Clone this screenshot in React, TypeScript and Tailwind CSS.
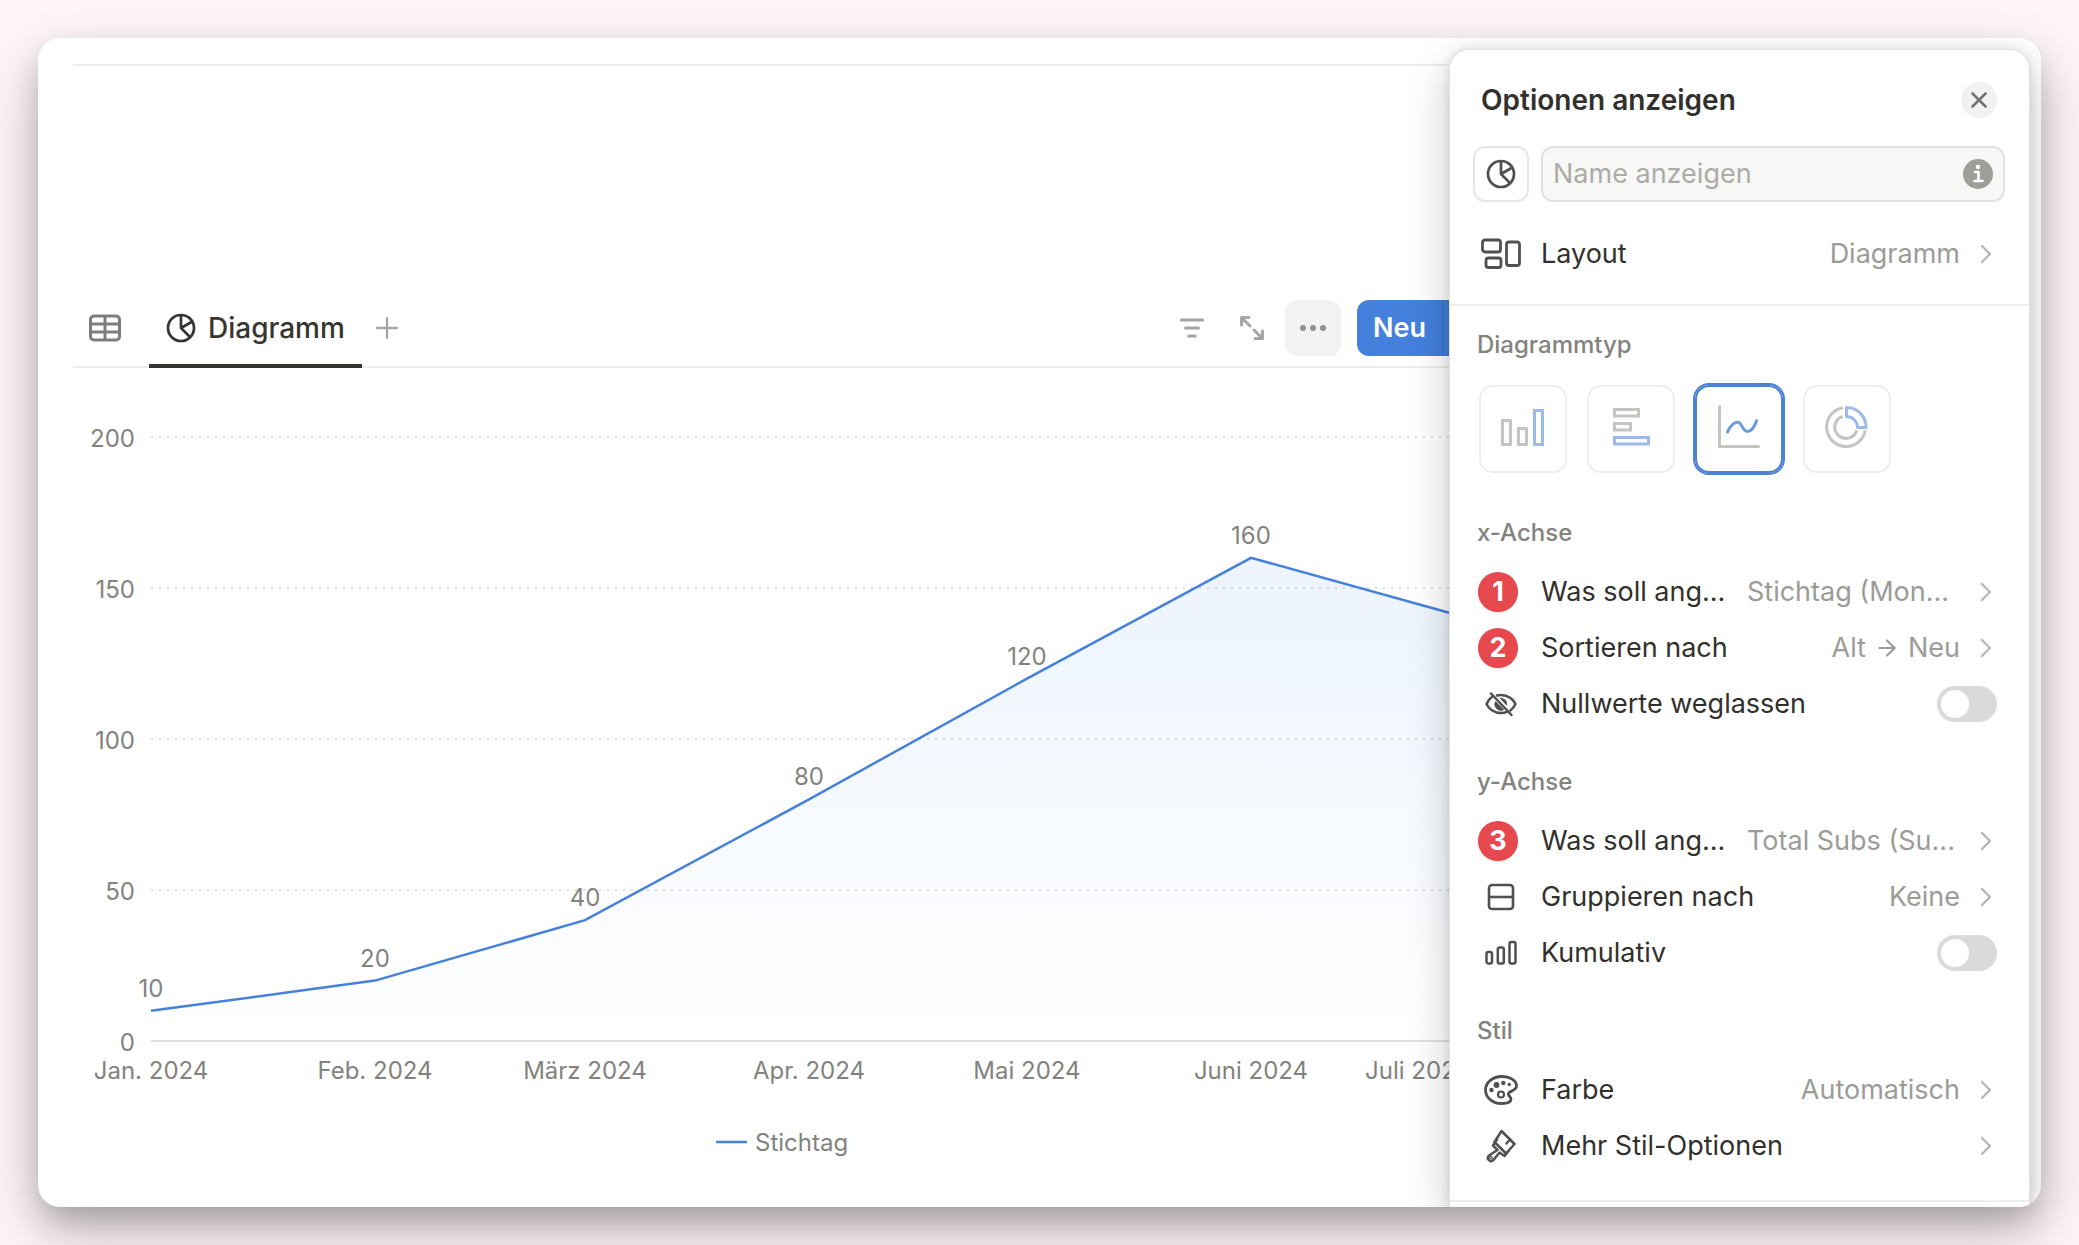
import React, { useState } from "react";
import { ArrowRight, Plus, X } from "lucide-react";

const months = [
  { label: "Jan. 2024", x: 113, value: 10 },
  { label: "Feb. 2024", x: 337, value: 20 },
  { label: "März 2024", x: 547, value: 40 },
  { label: "Apr. 2024", x: 771, value: 80 },
  { label: "Mai 2024", x: 989, value: 120 },
  { label: "Juni 2024", x: 1213, value: 160 },
  // the last label is pulled in so that it stays inside the plot
  { label: "Juli 2024", x: 1431, labelX: 1380, value: 140 },
];

const ticks = [200, 150, 100, 50, 0];
const BASE = 673;
const toY = (value: number) => BASE - value * 3.02;

const PieIcon = ({ size = 30 }: { size?: number }) => (
  <svg width={size} height={size} viewBox="0 0 30 30" fill="none" stroke="currentColor" strokeWidth="2.7" strokeLinejoin="round">
    <circle cx="15" cy="15" r="13" />
    <path d="M15 2v13l9.2 9.2M15 15l11.3-6.5" />
  </svg>
);

const TableIcon = () => (
  <svg width="32" height="28" viewBox="0 0 32 28" fill="none" stroke="currentColor" strokeWidth="3">
    <rect x="1.500" y="2" width="29" height="24" rx="3.500" />
    <path d="M1.500 10h29M1.500 18h29M16 2v24" />
  </svg>
);

const FilterIcon = () => (
  <svg width="26" height="22" viewBox="0 0 26 22" fill="none" stroke="currentColor" strokeWidth="3.2" strokeLinecap="round">
    <path d="M2.500 3h21M6.500 11h13M9.800 19h6.400" />
  </svg>
);

const ExpandIcon = () => (
  <svg width="26" height="26" viewBox="0 0 26 26" fill="none" stroke="currentColor" strokeWidth="3" strokeLinecap="round" strokeLinejoin="round">
    <path d="M2.500 10V2.500H10M2.500 2.500l8.500 8.500M23.500 16v7.500H16M23.500 23.500 15 15" />
  </svg>
);

const ChevronIcon = () => (
  <svg width="12" height="20" viewBox="0 0 12 20" fill="none" stroke="currentColor" strokeWidth="2.200" strokeLinecap="round" strokeLinejoin="round">
    <path d="m2 2 8 8-8 8" />
  </svg>
);

const InfoIcon = () => (
  <svg width="30" height="30" viewBox="0 0 30 30" fill="none">
    <circle cx="15" cy="15" r="15" fill="#9f9f9a" />
    <circle cx="15" cy="8" r="2.200" fill="#fff" />
    <path d="M12 13h3.500v8.500M11.500 22h8" stroke="#fff" strokeWidth="2.600" strokeLinecap="round" strokeLinejoin="round" />
  </svg>
);

const LayoutIcon = () => (
  <svg width="40" height="32" viewBox="0 0 40 32" fill="none" stroke="currentColor" strokeWidth="2.800">
    <rect x="1.500" y="2" width="18" height="12" rx="2.500" />
    <rect x="5" y="20" width="15" height="9.500" rx="2.500" />
    <rect x="25.500" y="4" width="13" height="23.500" rx="2.500" />
  </svg>
);

const EyeOffIcon = () => (
  <svg width="32" height="26" viewBox="0 0 32 26" fill="none" stroke="currentColor" strokeWidth="2.500" strokeLinecap="round">
    <path d="M7.500 5.500C4.500 7.500 2.500 10.500 1.500 13c2 4.500 7.500 9 14.500 9 2.200 0 4.200-.4 6-1.200M12 4.500c1.300-.3 2.600-.5 4-.5 7 0 12.500 4.500 14.500 9-1 2.300-2.800 4.700-5.200 6.400" />
    <path d="M10.500 10a6.400 6.400 0 0 0 8.800 8.800zM14.500 7a6.200 6.200 0 0 1 7.300 7.800z" fill="currentColor" stroke="none" />
    <path d="M6 2.500 26.500 24" />
  </svg>
);

const GroupIcon = () => (
  <svg width="28" height="28" viewBox="0 0 28 28" fill="none" stroke="currentColor" strokeWidth="2.600">
    <rect x="2" y="2" width="24" height="24" rx="3" />
    <path d="M2 14h24" />
  </svg>
);

const BarsIcon = () => (
  <svg width="32" height="26" viewBox="0 0 32 26" fill="none" stroke="currentColor" strokeWidth="2.500">
    <rect x="1.500" y="12" width="5.500" height="11.500" rx="1.800" />
    <rect x="12.800" y="7.500" width="6" height="16" rx="1.800" />
    <rect x="24.500" y="2" width="6" height="21.500" rx="1.800" />
  </svg>
);

const PaletteIcon = () => (
  <svg width="34" height="30" viewBox="0 0 34 30" fill="none" stroke="currentColor" strokeWidth="2.800">
    <path d="M17.500 1.500c8.500 0 15 4 15 9.500 0 4.500-6 4.500-7.800 7-1.700 2.300 2.300 3.500 2.300 6 0 3-4.500 4.500-9.500 4.500C8.500 28.500 1.500 22.500 1.500 15S9 1.500 17.500 1.500z" />
    <circle cx="17" cy="19.500" r="3" strokeWidth="2.200" />
    <g fill="currentColor" stroke="none">
      <circle cx="12.500" cy="10" r="2.900" />
      <circle cx="19.300" cy="8" r="2.200" />
      <circle cx="25.300" cy="9.500" r="1.700" />
      <circle cx="7.500" cy="15" r="2.200" />
    </g>
  </svg>
);

const BrushIcon = () => (
  <svg width="30" height="34" viewBox="0 0 30 34" fill="none" stroke="currentColor" strokeWidth="2.500" strokeLinejoin="round" strokeLinecap="round">
    <path d="M15.500 2 28.500 15 20 24.500 8.500 13z" />
    <path d="m11 10.500-4 6 4.500 4.500-8.500 5.500c-3 3 .8 7.500 4.500 4.500l6-7.500 5 3.500 4-5M24 10.500l-3.500 4" />
    <circle cx="5" cy="28.500" r=".6" />
  </svg>
);

const chartTypes = [
  {
    id: "bar",
    name: "Balken vertikal",
    icon: (
      <>
        <rect x="2.500" y="12.500" width="8" height="24" stroke="#c4c4c1" />
        <rect x="18.500" y="20.500" width="8" height="16" stroke="#c4c4c1" />
        <rect x="34.500" y="2.500" width="8" height="34" stroke="#9dbbe8" />
      </>
    ),
  },
  {
    id: "hbar",
    name: "Balken horizontal",
    icon: (
      <>
        <rect x="6.500" y="1.500" width="24" height="6.500" stroke="#c4c4c1" />
        <rect x="6.500" y="15.500" width="16" height="6.500" stroke="#c4c4c1" />
        <rect x="6.500" y="29.500" width="34" height="6.500" stroke="#9dbbe8" />
      </>
    ),
  },
  {
    id: "line",
    name: "Linie",
    icon: (
      <>
        <path d="M3.500-1.500v40h39" stroke="#c4c4c1" strokeLinecap="round" />
        <path
          d="M11.500 24c3-6.500 6.500-9.800 10-9.800 5 0 4.500 9.300 10 9.300 4 0 7-4.500 9-10.700"
          stroke="#6c9ade"
          strokeLinecap="round"
        />
      </>
    ),
  },
  {
    id: "donut",
    name: "Donut",
    icon: (
      <>
        <path d="M19-.3A19.500 19.500 0 1 0 41.300 22.500" stroke="#c4c4c1" />
        <path d="M18.500 8.500A11.200 11.200 0 1 0 32.700 22.500" stroke="#c4c4c1" />
        <path d="M22.500-.5A19.500 19.500 0 0 1 42 19.500h-8.500A11 11 0 0 0 22.500 8.500z" stroke="#9dbbe8" strokeLinejoin="round" />
      </>
    ),
  },
];

const Badge = ({ n }: { n: number }) => (
  <span className="mr-[6px] flex h-10 w-10 items-center justify-center rounded-full bg-[#e5484d] text-[27px] font-bold text-white shadow-sm">
    {n}
  </span>
);

const Row = ({
  icon,
  label,
  value,
  truncated,
}: {
  icon: React.ReactNode;
  label: string;
  value?: React.ReactNode;
  truncated?: boolean;
}) => (
  <button className="flex h-14 w-full items-center pl-7 pr-[37px] text-left">
    <span className="flex w-[46px] shrink-0 justify-center text-[#50504c]">{icon}</span>
    <span className="ml-[17px] whitespace-nowrap text-[#32302c]">{label}</span>
    <span
      className={`ml-auto flex items-center gap-2 whitespace-nowrap text-[#9b9b98] ${
        truncated ? "w-[213px]" : ""
      }`}
    >
      {value}
    </span>
    <span className="ml-5 shrink-0 text-[#b3b3b0]">
      <ChevronIcon />
    </span>
  </button>
);

const ToggleRow = ({ icon, label }: { icon: React.ReactNode; label: string }) => (
  <label className="flex h-14 w-full cursor-pointer items-center pl-7 pr-8">
    <span className="flex w-[46px] shrink-0 justify-center text-[#50504c]">{icon}</span>
    <span className="ml-[17px] whitespace-nowrap text-[#32302c]">{label}</span>
    <input type="checkbox" role="switch" className="peer sr-only" />
    <span className="ml-auto flex h-9 w-[60px] items-center rounded-full bg-[#dadad8] p-1 peer-checked:justify-end peer-checked:bg-[#4680dd]">
      <span className="h-7 w-7 rounded-full bg-white" />
    </span>
  </label>
);

const SectionTitle = ({ children }: { children: React.ReactNode }) => (
  <h3 className="px-[27px] text-2xl font-medium leading-8 text-[#82827e]">{children}</h3>
);

const Chart = () => {
  const line = months.map((m) => `${m.x},${toY(m.value)}`).join(" ");
  return (
    <svg viewBox="0 0 1411 800" className="block w-full overflow-visible" fontSize="24" fill="#82827e">
      <defs>
        <linearGradient id="area" x1="0" y1="0" x2="0" y2="1">
          <stop offset="0" stopColor="#4690f0" stopOpacity=".1" />
          <stop offset="1" stopColor="#4690f0" stopOpacity="0" />
        </linearGradient>
      </defs>
      {ticks.map((t) => (
        <g key={t}>
          <line
            x1="113"
            x2="1431"
            y1={toY(t)}
            y2={toY(t)}
            stroke={t ? "#dededc" : "#e0e0de"}
            strokeWidth="2"
            strokeDasharray={t ? "2 6" : undefined}
          />
          <text x="97" y={toY(t) + 10} textAnchor="end">
            {t}
          </text>
        </g>
      ))}
      <polygon points={`113,${BASE} ${line} 1431,${BASE}`} fill="url(#area)" />
      <polyline points={line} fill="none" stroke="#4680dd" strokeWidth="2.5" />
      {months.map((m) => (
        <g key={m.label} textAnchor="middle">
          <text x={m.x} y={toY(m.value) - 14}>
            {m.value}
          </text>
          <text x={m.labelX ?? m.x} y={BASE + 38}>
            {m.label}
          </text>
        </g>
      ))}
      <line x1="678" x2="709" y1="774" y2="774" stroke="#4680dd" strokeWidth="2.5" />
      <text x="717" y="783">
        Stichtag
      </text>
    </svg>
  );
};

export default function App() {
  const [type, setType] = useState("line");

  return (
    <div className="flex min-h-screen bg-[#fef5f7] p-[38px] font-['Inter',sans-serif] text-[27px]">
      <div className="flex min-w-0 flex-1 overflow-hidden rounded-[22px] bg-white shadow-[0_26px_60px_0_rgba(0,0,0,0.24),0_14px_30px_-4px_rgba(0,0,0,0.2)]">
        <main className="min-w-0 flex-1">
          <div className="ml-[35px] mt-[26px] h-[2px] bg-[#ededec]" />

          <div className="ml-[35px] mt-[222px] flex h-[80px] items-start border-b-2 border-[#ededec]">
            <button aria-label="Tabelle" className="ml-4 mt-3 flex h-14 items-center text-[#7d7d7a]">
              <TableIcon />
            </button>
            <button className="ml-7 flex h-[80px] items-start border-b-4 border-[#37352f] px-[17px] pt-3 text-[28px] font-medium text-[#37352f]">
              <span className="flex h-14 items-center gap-3">
                <PieIcon />
                Diagramm
              </span>
            </button>
            <button aria-label="Ansicht hinzufügen" className="ml-2 mt-3 flex h-14 items-center text-[#a5a5a2]">
              <Plus size={34} strokeWidth={1.6} />
            </button>

            <div className="ml-auto mt-3 flex h-14 items-center text-[#a5a5a2]">
              <button aria-label="Filter">
                <FilterIcon />
              </button>
              <button aria-label="Vergrößern" className="ml-[34px]">
                <ExpandIcon />
              </button>
              <button aria-label="Mehr" className="ml-5 flex h-14 w-14 items-center justify-center gap-1 rounded-xl bg-[#f2f2f1]">
                <span className="h-[6px] w-[6px] rounded-full bg-[#91918e]" />
                <span className="h-[6px] w-[6px] rounded-full bg-[#91918e]" />
                <span className="h-[6px] w-[6px] rounded-full bg-[#91918e]" />
              </button>
              <button className="ml-4 flex h-14 items-stretch rounded-l-xl bg-[#4480dc] font-semibold text-white">
                <span className="flex items-center border-r border-[#3a6fc2] pl-4 pr-4">Neu</span>
                <span className="w-[6px]" />
              </button>
            </div>
          </div>

          <Chart />
        </main>

        <aside className="z-10 mr-[11px] mt-[11px] w-[581px] shrink-0 rounded-t-[20px] border border-b-0 border-[#e2e2e1] bg-white shadow-[0_14px_40px_rgba(0,0,0,0.22),0_0_8px_rgba(0,0,0,0.1)]">
          <div className="flex items-center justify-between pl-[31px] pr-8 pt-8">
            <h2 className="text-[28px] font-semibold leading-9 text-[#32302c]">Optionen anzeigen</h2>
            <button aria-label="Schließen" className="flex h-9 w-9 items-center justify-center rounded-full bg-[#f1f1f0] text-[#73726e]">
              <X size={26} strokeWidth={2.4} />
            </button>
          </div>

          <div className="mt-7 flex gap-3 pl-[23px] pr-6">
            <button aria-label="Symbol" className="flex h-14 w-14 shrink-0 items-center justify-center rounded-xl border-2 border-[#e6e6e4] text-[#50504c]">
              <PieIcon />
            </button>
            <div className="flex h-14 min-w-0 flex-1 items-center rounded-xl border-2 border-[#e1e1df] bg-[#f7f7f5] px-[10px]">
              <input
                aria-label="Name anzeigen"
                placeholder="Name anzeigen"
                className="min-w-0 flex-1 bg-transparent outline-none placeholder:text-[#acaba8]"
              />
              <InfoIcon />
            </div>
          </div>

          <div className="mt-6 border-b-2 border-[#eeeeed] pb-[22px]">
            <Row icon={<LayoutIcon />} label="Layout" value="Diagramm" />
          </div>

          <div className="mt-[23px]">
            <SectionTitle>Diagrammtyp</SectionTitle>
            <div className="mt-6 flex gap-5 px-[29px]">
              {chartTypes.map((c) => (
                <button
                  key={c.id}
                  aria-label={c.name}
                  onClick={() => setType(c.id)}
                  className={`flex h-[88px] w-[88px] items-center justify-center rounded-[14px] border-2 ${
                    type === c.id ? "border-[#4a82d4] ring-2 ring-[#4a82d4]" : "border-[#eeeeed]"
                  }`}
                >
                  <svg width="46" height="42" viewBox="0 0 46 42" fill="none" strokeWidth="3" className="overflow-visible">
                    {c.icon}
                  </svg>
                </button>
              ))}
            </div>
          </div>

          <div className="mt-11">
            <SectionTitle>x-Achse</SectionTitle>
            <div className="mt-[15px]">
              <Row icon={<Badge n={1} />} label="Was soll ang..." value="Stichtag (Mon..." truncated />
              <Row
                icon={<Badge n={2} />}
                label="Sortieren nach"
                value={
                  <>
                    Alt <ArrowRight size={26} /> Neu
                  </>
                }
              />
              <ToggleRow icon={<EyeOffIcon />} label="Nullwerte weglassen" />
            </div>
          </div>

          <div className="mt-[34px]">
            <SectionTitle>y-Achse</SectionTitle>
            <div className="mt-[15px]">
              <Row icon={<Badge n={3} />} label="Was soll ang..." value="Total Subs (Su..." truncated />
              <Row icon={<GroupIcon />} label="Gruppieren nach" value="Keine" />
              <ToggleRow icon={<BarsIcon />} label="Kumulativ" />
            </div>
          </div>

          <div className="mt-[34px] border-b-2 border-[#eeeeed] pb-[26px]">
            <SectionTitle>Stil</SectionTitle>
            <div className="mt-[15px]">
              <Row icon={<PaletteIcon />} label="Farbe" value="Automatisch" />
              <Row icon={<BrushIcon />} label="Mehr Stil-Optionen" />
            </div>
          </div>
        </aside>
      </div>
    </div>
  );
}
